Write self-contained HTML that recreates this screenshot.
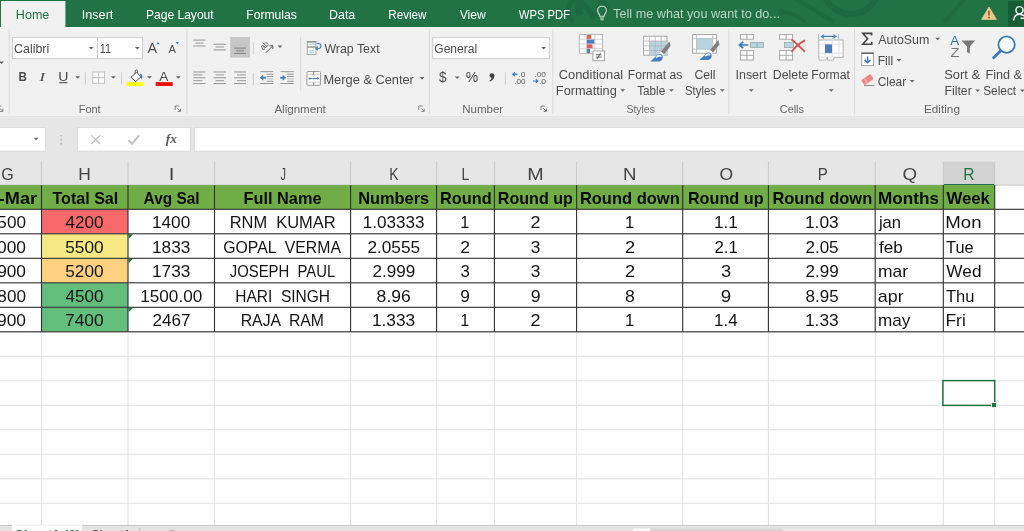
<!DOCTYPE html>
<html lang="en"><head><meta charset="utf-8"><title>Excel worksheet</title>
<style>
html,body{margin:0;padding:0;background:#fff;}
body{width:1024px;height:531px;overflow:hidden;font-family:"Liberation Sans",sans-serif;}
svg{display:block;position:absolute;left:0;top:0;will-change:transform}
svg text{font-family:"Liberation Sans",sans-serif;white-space:pre}
</style></head><body>
<svg width="1024" height="531" viewBox="0 0 1024 531">
<g id="tabbar">
<rect x="0" y="0" width="1024" height="27" fill="#217346"/>
<g fill="none" stroke="#1e6a40" stroke-linecap="butt">
<circle cx="851" cy="-14.2" r="28.25" stroke-width="6.3"/>
<path d="M796 -1 L834 22" stroke-width="4.4"/>
<path d="M780.4 12 C786 12 789 13.4 794 14.8 C798 16 800 18 805 22" stroke-width="3.6"/>
<circle cx="781" cy="12" r="2.6" stroke-width="1.6"/>
<path d="M965 -1 L944 22" stroke-width="4"/>
<path d="M573.5 22 C565 14 568 3 575 -2" stroke-width="5"/>
<path d="M580.5 -1 C577.5 5 578 11 580 15.5" stroke-width="7"/>
<path d="M581 1.5 L595.5 17.5" stroke-width="6"/>
<path d="M599 -1 C604 2 607 6 607.6 11" stroke-width="5"/>
</g>
<rect x="1" y="1" width="64.4" height="27" fill="#f1f1f1"/>
<text x="15.87" y="18.75" font-size="13.6" fill="#217346" textLength="33.49" lengthAdjust="spacingAndGlyphs" >Home</text>
<text x="81.73" y="18.75" font-size="13.6" fill="#ffffff" textLength="31.66" lengthAdjust="spacingAndGlyphs" >Insert</text>
<text x="145.91" y="18.75" font-size="13.6" fill="#ffffff" textLength="67.78" lengthAdjust="spacingAndGlyphs" >Page Layout</text>
<text x="246.31" y="18.75" font-size="13.6" fill="#ffffff" textLength="50.53" lengthAdjust="spacingAndGlyphs" >Formulas</text>
<text x="328.98" y="18.75" font-size="13.6" fill="#ffffff" textLength="26.32" lengthAdjust="spacingAndGlyphs" >Data</text>
<text x="388.24" y="18.75" font-size="13.6" fill="#ffffff" textLength="38.33" lengthAdjust="spacingAndGlyphs" >Review</text>
<text x="459.65" y="18.75" font-size="13.6" fill="#ffffff" textLength="26.12" lengthAdjust="spacingAndGlyphs" >View</text>
<text x="518.75" y="18.75" font-size="13.6" fill="#ffffff" textLength="51.40" lengthAdjust="spacingAndGlyphs" >WPS PDF</text>
<text x="613.12" y="18.40" font-size="13.2" fill="#b9d5c4" textLength="166.83" lengthAdjust="spacingAndGlyphs" >Tell me what you want to do...</text>
<g fill="none" stroke="#c9dfd1" stroke-width="1.1"><path d="M599.9 16.2 C599.9 14 597.6 13.2 597.6 10.6 A4.4 4.4 0 0 1 606.4 10.6 C606.4 13.2 604.1 14 604.1 16.2 Z"/><path d="M600 18 H604 M600.4 19.8 H603.6"/></g>
<path d="M989 7 L996.4 19.4 H981.6 Z" fill="#eac98b" stroke="#eac98b" stroke-width="0.8" stroke-linejoin="round"/>
<path d="M989 10.6 V15.4 M989 16.8 V18.2" stroke="#6b4a16" stroke-width="1.3" fill="none"/>
<rect x="1008" y="1" width="16" height="25.6" fill="#185c37"/>
<g fill="none" stroke="#fff" stroke-width="1.4"><circle cx="1019.5" cy="10.2" r="3.6"/><path d="M1013.6 20.5 C1014 15.5 1017 14.2 1019.5 14.2 C1021 14.2 1022.5 14.8 1024 16"/><path d="M1020.5 18.2 H1024"/></g>
</g>
<g id="ribbon">
<rect x="0" y="27" width="1024" height="90" fill="#f1f1f1"/>
<rect x="1" y="26.2" width="64.4" height="2" fill="#f1f1f1"/>
<rect x="0" y="116.5" width="1024" height="0.9" fill="#d9d9d9"/>
<rect x="8.7" y="29" width="1" height="85" fill="#dcdcdc"/>
<rect x="186.4" y="29" width="1" height="85" fill="#dcdcdc"/>
<rect x="300.1" y="36.7" width="1" height="53.8" fill="#dcdcdc"/>
<rect x="428.9" y="29" width="1" height="85" fill="#dcdcdc"/>
<rect x="552.3" y="29" width="1" height="85" fill="#dcdcdc"/>
<rect x="728.3" y="29" width="1" height="85" fill="#dcdcdc"/>
<rect x="854.0" y="29" width="1" height="85" fill="#dcdcdc"/>
<path d="M-0.80 61.40 H4.00 L1.60 63.90 Z" fill="#666"/>
<g fill="none" stroke="#777" stroke-width="0.9"><path d="M-2.5 110 V106 H1.5"/><path d="M-0.2999999999999998 108.2 L2.7 111.2 M2.9000000000000004 108.6 V111.4 H0.10000000000000009"/></g>
<rect x="12.3" y="37.7" width="85.1" height="20.9" fill="#fff" stroke="#c8c8c8" stroke-width="0.9"/>
<rect x="97.4" y="37.7" width="45.2" height="20.9" fill="#fff" stroke="#c8c8c8" stroke-width="0.9"/>
<text x="14.07" y="53.30" font-size="12.3" fill="#4c4c4c" textLength="35.17" lengthAdjust="spacingAndGlyphs" >Calibri</text>
<path d="M88.80 47.00 H93.60 L91.20 49.50 Z" fill="#666"/>
<text x="99.83" y="53.30" font-size="12.3" fill="#4c4c4c" textLength="11.27" lengthAdjust="spacingAndGlyphs" >11</text>
<path d="M134.90 47.00 H139.70 L137.30 49.50 Z" fill="#666"/>
<text x="147.47" y="53.30" font-size="14.6" fill="#4c4c4c" textLength="9.56" lengthAdjust="spacingAndGlyphs" >A</text>
<path d="M156.3 44.2 L158.0 42.0 L159.7 44.2 Z" fill="#3c78b4"/>
<text x="168.38" y="53.30" font-size="11.4" fill="#4c4c4c" textLength="7.44" lengthAdjust="spacingAndGlyphs" >A</text>
<path d="M175.6 42.0 L179.0 42.0 L177.3 44.2 Z" fill="#3c78b4"/>
<text x="18.42" y="81.30" font-size="12.8" fill="#4c4c4c" textLength="8.41" lengthAdjust="spacingAndGlyphs" font-weight="bold" >B</text>
<text x="39.37" y="81.30" font-size="12.8" fill="#4c4c4c" textLength="5.85" lengthAdjust="spacingAndGlyphs" font-style="italic" style="font-family:'Liberation Serif',serif" >I</text>
<text x="58.21" y="81.00" font-size="12.4" fill="#4c4c4c" textLength="10.17" lengthAdjust="spacingAndGlyphs" >U</text>
<rect x="59.2" y="82.2" width="8.2" height="1" fill="#444"/>
<path d="M75.30 76.20 H80.10 L77.70 78.70 Z" fill="#666"/>
<rect x="84.9" y="72.3" width="1" height="12.3" fill="#d0d0d0"/>
<g fill="#fcfcfc" stroke="#c2c2c2" stroke-width="1"><rect x="92.7" y="72" width="11.8" height="11.3"/><path d="M98.6 72 V83.3 M92.7 77.65 H104.5"/></g>
<path d="M110.90 76.20 H115.70 L113.30 78.70 Z" fill="#666"/>
<rect x="121" y="72.3" width="1" height="12.3" fill="#d0d0d0"/>
<g fill="none" stroke="#555" stroke-width="1"><path d="M131 77.2 L136.6 72.2 L141 77 L135.6 81.6 Z" fill="#fff"/><path d="M135.2 73.6 V71.2 A1.2 1.2 0 0 1 137.6 71.2 V73"/></g>
<path d="M140.2 74 C141.8 75.2 142 77.2 141.2 78.6" fill="none" stroke="#3c78b4" stroke-width="1.3"/>
<rect x="126.6" y="82.1" width="17" height="3.9" fill="#ffff14"/>
<path d="M147.00 76.20 H151.80 L149.40 78.70 Z" fill="#666"/>
<text x="159.27" y="81.20" font-size="13.2" fill="#4c4c4c" textLength="9.05" lengthAdjust="spacingAndGlyphs" >A</text>
<rect x="155.7" y="82.1" width="17" height="3.9" fill="#e81212"/>
<path d="M175.90 76.20 H180.70 L178.30 78.70 Z" fill="#666"/>
<text x="78.70" y="113.00" font-size="11.6" fill="#666" textLength="21.98" lengthAdjust="spacingAndGlyphs" >Font</text>
<g fill="none" stroke="#777" stroke-width="0.9"><path d="M175.2 110 V106 H179.2"/><path d="M177.39999999999998 108.2 L180.39999999999998 111.2 M180.6 108.6 V111.4 H177.79999999999998"/></g>
<rect x="193.30" y="39.65" width="12.10" height="0.9" fill="#8e8e8e"/>
<rect x="195.30" y="42.65" width="8.10" height="0.9" fill="#8e8e8e"/>
<rect x="193.30" y="45.55" width="12.10" height="0.9" fill="#8e8e8e"/>
<rect x="213.60" y="43.75" width="12.30" height="0.9" fill="#8e8e8e"/>
<rect x="215.60" y="46.55" width="8.30" height="0.9" fill="#8e8e8e"/>
<rect x="213.60" y="49.45" width="12.30" height="0.9" fill="#8e8e8e"/>
<rect x="230.2" y="37.1" width="19.7" height="20.5" fill="#c6c6c6"/>
<rect x="234.10" y="47.65" width="11.90" height="0.9" fill="#777"/>
<rect x="236.10" y="50.35" width="7.90" height="0.9" fill="#777"/>
<rect x="234.10" y="52.95" width="11.90" height="0.9" fill="#777"/>
<rect x="252.9" y="42.2" width="1" height="12.5" fill="#d0d0d0"/>
<g transform="translate(263.6,50.6) rotate(-47)"><text x="0" y="0" font-size="8.4" fill="#555" textLength="8.6" lengthAdjust="spacingAndGlyphs">ab</text></g>
<path d="M265.8 52.8 L272.6 46 M269.6 45.8 L272.9 45.7 L272.8 49" fill="none" stroke="#555" stroke-width="1"/>
<path d="M277.60 45.40 H282.40 L280.00 47.90 Z" fill="#666"/>
<g fill="#fbfbfb" stroke="#a2a2a2" stroke-width="0.9"><rect x="307.3" y="41.6" width="8.7" height="5"/><rect x="307.3" y="47.4" width="8.7" height="7.2"/></g>
<rect x="307" y="41.2" width="9.3" height="1.3" fill="#8a8a8a"/>
<path d="M308.8 44.1 H316 M308.8 50.8 H314.4 M308.8 52.8 H314.4" stroke="#8db7dc" stroke-width="0.8" fill="none"/>
<path d="M316.8 43.5 H318.4 A2.5 2.5 0 0 1 318.4 48.5 H316.4 M317.9 46.7 L316 48.5 L317.9 50.3" fill="none" stroke="#3f7fc1" stroke-width="1.1"/>
<text x="324.45" y="53.30" font-size="12.3" fill="#4c4c4c" textLength="55.14" lengthAdjust="spacingAndGlyphs" >Wrap Text</text>
<rect x="193.30" y="71.55" width="12.10" height="0.9" fill="#8e8e8e"/>
<rect x="213.60" y="71.55" width="12.30" height="0.9" fill="#8e8e8e"/>
<rect x="234.10" y="71.55" width="11.90" height="0.9" fill="#8e8e8e"/>
<rect x="193.30" y="74.45" width="9.10" height="0.9" fill="#8e8e8e"/>
<rect x="215.60" y="74.45" width="8.30" height="0.9" fill="#8e8e8e"/>
<rect x="237.10" y="74.45" width="8.90" height="0.9" fill="#8e8e8e"/>
<rect x="193.30" y="77.35" width="12.10" height="0.9" fill="#8e8e8e"/>
<rect x="213.60" y="77.35" width="12.30" height="0.9" fill="#8e8e8e"/>
<rect x="234.10" y="77.35" width="11.90" height="0.9" fill="#8e8e8e"/>
<rect x="193.30" y="80.25" width="9.10" height="0.9" fill="#8e8e8e"/>
<rect x="215.60" y="80.25" width="8.30" height="0.9" fill="#8e8e8e"/>
<rect x="237.10" y="80.25" width="8.90" height="0.9" fill="#8e8e8e"/>
<rect x="193.30" y="83.15" width="12.10" height="0.9" fill="#8e8e8e"/>
<rect x="213.60" y="83.15" width="12.30" height="0.9" fill="#8e8e8e"/>
<rect x="234.10" y="83.15" width="11.90" height="0.9" fill="#8e8e8e"/>
<rect x="252.9" y="72.9" width="1" height="12.3" fill="#d0d0d0"/>
<rect x="260.20" y="71.25" width="13.00" height="0.9" fill="#8e8e8e"/>
<rect x="280.40" y="71.25" width="13.30" height="0.9" fill="#8e8e8e"/>
<rect x="260.20" y="83.05" width="13.00" height="0.9" fill="#8e8e8e"/>
<rect x="280.40" y="83.05" width="13.30" height="0.9" fill="#8e8e8e"/>
<rect x="266.80" y="73.75" width="6.40" height="0.9" fill="#8e8e8e"/>
<rect x="287.20" y="73.75" width="6.50" height="0.9" fill="#8e8e8e"/>
<rect x="266.80" y="76.10" width="6.40" height="0.9" fill="#8e8e8e"/>
<rect x="287.20" y="76.10" width="6.50" height="0.9" fill="#8e8e8e"/>
<rect x="266.80" y="78.45" width="6.40" height="0.9" fill="#b5b5b5"/>
<rect x="287.20" y="78.45" width="6.50" height="0.9" fill="#b5b5b5"/>
<rect x="266.80" y="80.80" width="6.40" height="0.9" fill="#8e8e8e"/>
<rect x="287.20" y="80.80" width="6.50" height="0.9" fill="#8e8e8e"/>
<path d="M259.7 77.8 L263.2 74.8 V76.8 H265.9 V78.8 H263.2 V80.8 Z" fill="#4a7ebb"/>
<path d="M286.1 77.8 L282.6 74.8 V76.8 H280.2 V78.8 H282.6 V80.8 Z" fill="#4a7ebb"/>
<g fill="#fbfbfb" stroke="#9c9c9c" stroke-width="1"><rect x="306.9" y="71.5" width="13.6" height="13.8" rx="1.2"/></g>
<path d="M307 74.6 H320.4 M307 82.3 H320.4" stroke="#cfcfcf" stroke-width="0.9" fill="none"/><path d="M313.7 71.5 V74.6 M313.7 82.3 V85.3" stroke="#777" stroke-width="0.9" fill="none"/>
<path d="M309.4 78.5 H317.8" stroke="#4a7ebb" stroke-width="0.9" fill="none"/><path d="M308.1 78.5 L310.3 76.9 V80.1 Z M319.4 78.5 L317.2 76.9 V80.1 Z" fill="#4a7ebb"/>
<text x="323.45" y="83.60" font-size="12.3" fill="#4c4c4c" textLength="90.46" lengthAdjust="spacingAndGlyphs" >Merge &amp; Center</text>
<path d="M419.60 77.00 H424.40 L422.00 79.50 Z" fill="#666"/>
<text x="274.38" y="113.00" font-size="11.6" fill="#666" textLength="51.41" lengthAdjust="spacingAndGlyphs" >Alignment</text>
<g fill="none" stroke="#777" stroke-width="0.9"><path d="M418.8 110 V106 H422.8"/><path d="M421.0 108.2 L424.0 111.2 M424.2 108.6 V111.4 H421.40000000000003"/></g>
<rect x="432.7" y="37.7" width="116.6" height="20.9" fill="#fff" stroke="#c8c8c8" stroke-width="0.9"/>
<text x="434.29" y="53.30" font-size="12.3" fill="#4c4c4c" textLength="42.81" lengthAdjust="spacingAndGlyphs" >General</text>
<path d="M541.20 47.00 H546.00 L543.60 49.50 Z" fill="#666"/>
<text x="439.05" y="82.40" font-size="14.5" fill="#4c4c4c" textLength="7.57" lengthAdjust="spacingAndGlyphs" >$</text>
<path d="M454.80 76.40 H459.60 L457.20 78.90 Z" fill="#666"/>
<text x="465.70" y="82.40" font-size="14" fill="#4c4c4c" textLength="12.39" lengthAdjust="spacingAndGlyphs" >%</text>
<circle cx="491.9" cy="75.5" r="2.35" fill="#444"/><path d="M494.2 75 C494.8 78 492.8 80.6 489.6 81.6 L489.3 80.7 C491 79.8 491.8 78.6 491.4 77 Z" fill="#444"/>
<rect x="504.9" y="72.3" width="1" height="12.3" fill="#d0d0d0"/>
<text x="518.5" y="77.2" font-size="6.6" fill="#555" textLength="7" lengthAdjust="spacingAndGlyphs">.0</text>
<text x="514.2" y="84" font-size="6.6" fill="#555" textLength="11.3" lengthAdjust="spacingAndGlyphs">.00</text>
<path d="M517.6 74.2 H513 M514.8 72.4 L512.8 74.2 L514.8 76" fill="none" stroke="#3c78b4" stroke-width="1.2"/>
<text x="534.5" y="77.2" font-size="6.6" fill="#555" textLength="11.3" lengthAdjust="spacingAndGlyphs">.00</text>
<text x="539" y="84" font-size="6.6" fill="#555" textLength="7" lengthAdjust="spacingAndGlyphs">.0</text>
<path d="M533 81 H537.6 M535.8 79.2 L537.8 81 L535.8 82.8" fill="none" stroke="#3c78b4" stroke-width="1.2"/>
<text x="462.15" y="113.00" font-size="11.6" fill="#666" textLength="41.04" lengthAdjust="spacingAndGlyphs" >Number</text>
<g fill="none" stroke="#777" stroke-width="0.9"><path d="M541 110 V106 H545"/><path d="M543.2 108.2 L546.2 111.2 M546.4 108.6 V111.4 H543.6"/></g>
<g><rect x="579.3" y="34.4" width="23.2" height="19" fill="#fff" stroke="#b0b0b0" stroke-width="0.9"/>
<path d="M579.3 39.2 H602.5 M579.3 43.9 H602.5 M579.3 48.6 H602.5 M586.6 34.4 V53.4 M594.9 34.4 V53.4" stroke="#c8c8c8" stroke-width="0.8" fill="none"/>
<rect x="586.9" y="34.9" width="4.4" height="4" fill="#d9625e"/><rect x="586.9" y="39.6" width="7.4" height="4" fill="#4a7ebb"/><rect x="586.9" y="44.3" width="5.6" height="4" fill="#d9625e"/><rect x="586.9" y="49" width="3" height="4" fill="#4a7ebb"/>
<rect x="592.9" y="51" width="11.7" height="9.8" fill="#fff" stroke="#9a9a9a" stroke-width="0.9"/>
<path d="M595.8 54.8 H601.6 M595.8 57 H601.6 M600.6 52.8 L597 59" stroke="#555" stroke-width="0.9" fill="none"/></g>
<text x="558.75" y="78.70" font-size="12.3" fill="#4c4c4c" textLength="64.41" lengthAdjust="spacingAndGlyphs" >Conditional</text>
<text x="555.86" y="95.30" font-size="12.3" fill="#4c4c4c" textLength="60.87" lengthAdjust="spacingAndGlyphs" >Formatting</text>
<path d="M620.30 89.30 H625.10 L622.70 91.80 Z" fill="#666"/>
<g><rect x="643.5" y="36.2" width="23.5" height="19" fill="#fff" stroke="#a0a0a0" stroke-width="0.9"/>
<rect x="649.6" y="41" width="17.4" height="14.2" fill="#b8d4de"/>
<path d="M643.5 41 H667 M643.5 45.8 H667 M643.5 50.5 H667 M649.6 36.2 V55.2 M655.4 36.2 V55.2 M661.2 36.2 V55.2" stroke="#b5b5b5" stroke-width="0.8" fill="none"/></g>
<g transform="translate(0,0)">
<path d="M669.4 41.4 L670.6 46 L664.2 54 L661 51.4 Z" fill="#808080"/>
<path d="M661 51.6 L664 54.2 L662.6 56 L659.4 53.6 Z" fill="#fafafa"/>
<path d="M650.4 61.4 L655.6 56.6 C657 53.6 660.6 53 662.2 55.2 C663.8 57.6 662 61.4 659.2 61.4 Z" fill="#4a7ebb"/>
<path d="M656.2 57.6 C657 55.2 660 54.6 661.4 56.4 C660.6 55.8 657.6 56.2 656.2 57.6 Z" fill="#eef3f8" stroke="#eef3f8" stroke-width="1.2"/>
</g>
<text x="627.81" y="78.70" font-size="12.3" fill="#4c4c4c" textLength="54.43" lengthAdjust="spacingAndGlyphs" >Format as</text>
<text x="637.15" y="95.30" font-size="12.3" fill="#4c4c4c" textLength="28.15" lengthAdjust="spacingAndGlyphs" >Table</text>
<path d="M669.10 89.30 H673.90 L671.50 91.80 Z" fill="#666"/>
<g><rect x="692.6" y="34.6" width="24" height="18.6" fill="#fff" stroke="#a0a0a0" stroke-width="0.9"/>
<rect x="696.6" y="38.6" width="16" height="10.6" fill="#b8d4de"/>
<path d="M692.6 38.6 H716.6 M692.6 49.2 H716.6 M696.6 34.6 V53.2 M712.6 34.6 V53.2" stroke="#b5b5b5" stroke-width="0.8" fill="none"/></g>
<g transform="translate(48.9,-1.4)">
<path d="M669.4 41.4 L670.6 46 L664.2 54 L661 51.4 Z" fill="#808080"/>
<path d="M661 51.6 L664 54.2 L662.6 56 L659.4 53.6 Z" fill="#fafafa"/>
<path d="M650.4 61.4 L655.6 56.6 C657 53.6 660.6 53 662.2 55.2 C663.8 57.6 662 61.4 659.2 61.4 Z" fill="#4a7ebb"/>
<path d="M656.2 57.6 C657 55.2 660 54.6 661.4 56.4 C660.6 55.8 657.6 56.2 656.2 57.6 Z" fill="#eef3f8" stroke="#eef3f8" stroke-width="1.2"/>
</g>
<text x="694.38" y="78.70" font-size="12.3" fill="#4c4c4c" textLength="21.04" lengthAdjust="spacingAndGlyphs" >Cell</text>
<text x="684.98" y="95.30" font-size="12.3" fill="#4c4c4c" textLength="31.03" lengthAdjust="spacingAndGlyphs" >Styles</text>
<path d="M719.90 89.30 H724.70 L722.30 91.80 Z" fill="#666"/>
<text x="626.43" y="113.00" font-size="11.6" fill="#666" textLength="28.45" lengthAdjust="spacingAndGlyphs" >Styles</text>
<rect x="740.4" y="34.6" width="13" height="4.6" fill="#fff" stroke="#a0a0a0" stroke-width="0.9"/><path d="M746.90 34.6 V39.2 " stroke="#a0a0a0" stroke-width="0.9" fill="none"/>
<rect x="740.4" y="50.6" width="13" height="9.4" fill="#fff" stroke="#a0a0a0" stroke-width="0.9"/><path d="M746.90 50.6 V60.0 M740.4 55.30 H753.4 " stroke="#a0a0a0" stroke-width="0.9" fill="none"/>
<rect x="750.6" y="42.4" width="13" height="5" fill="#b8d4de" stroke="#9aa" stroke-width="0.8"/><path d="M757.1 42.4 V47.4" stroke="#9aa" stroke-width="0.8"/>
<path d="M748.4 45 H739.6 M743.2 41.8 L739.4 45 L743.2 48.2" fill="none" stroke="#3c78b4" stroke-width="1.7"/>
<text x="735.55" y="78.70" font-size="12.3" fill="#4c4c4c" textLength="31.04" lengthAdjust="spacingAndGlyphs" >Insert</text>
<path d="M748.90 89.30 H753.70 L751.30 91.80 Z" fill="#666"/>
<rect x="779.6" y="34.6" width="13" height="4.6" fill="#fff" stroke="#a0a0a0" stroke-width="0.9"/><path d="M786.10 34.6 V39.2 " stroke="#a0a0a0" stroke-width="0.9" fill="none"/>
<rect x="779.6" y="50.6" width="13" height="9.4" fill="#fff" stroke="#a0a0a0" stroke-width="0.9"/><path d="M786.10 50.6 V60.0 M779.6 55.30 H792.6 " stroke="#a0a0a0" stroke-width="0.9" fill="none"/>
<rect x="784.6" y="42.4" width="9" height="5" fill="#b8d4de" stroke="#9aa" stroke-width="0.8"/>
<path d="M792.2 40 C796 43 800 47 804.4 51.2 M804.4 40.6 C799 43.6 795 47 792.2 51.2" fill="none" stroke="#cf5555" stroke-width="1.9" stroke-linecap="round"/>
<text x="772.79" y="78.70" font-size="12.3" fill="#4c4c4c" textLength="35.66" lengthAdjust="spacingAndGlyphs" >Delete</text>
<path d="M788.50 89.30 H793.30 L790.90 91.80 Z" fill="#666"/>
<rect x="818.8" y="40" width="24.3" height="17.3" fill="#fff" stroke="#a9a9a9" stroke-width="0.9"/>
<path d="M825.2 40 V57.3 M832.2 40 V57.3 M839 40 V57.3 M818.8 44.2 H843.1 M818.8 53.2 H843.1" stroke="#dcdcdc" stroke-width="0.8" fill="none"/>
<rect x="825" y="44.4" width="7" height="8.6" fill="#4a7ebb"/>
<path d="M819 57.3 V60.2 H825.6 L826.8 57.3 M827.5 57.3 V60.2 H833.2 L834.4 57.3" fill="#fff" stroke="#a9a9a9" stroke-width="0.8"/>
<path d="M821.6 36.4 H835.8 M824 34.6 L821.4 36.4 L824 38.2 M833.4 34.6 L836 36.4 L833.4 38.2" fill="none" stroke="#4a7ebb" stroke-width="1.1"/><path d="M818.6 34 V39 M838.4 34 V39" fill="none" stroke="#8fb0d6" stroke-width="0.9"/>
<text x="811.30" y="78.70" font-size="12.3" fill="#4c4c4c" textLength="38.69" lengthAdjust="spacingAndGlyphs" >Format</text>
<path d="M828.90 89.30 H833.70 L831.30 91.80 Z" fill="#666"/>
<text x="779.75" y="113.00" font-size="11.6" fill="#666" textLength="24.25" lengthAdjust="spacingAndGlyphs" >Cells</text>
<path d="M871.6 35.6 V33.4 H862.8 L867.6 38.8 L862.8 44.2 H871.8 V41.8" fill="none" stroke="#444" stroke-width="1.6" stroke-linejoin="miter"/>
<text x="878.28" y="44.20" font-size="12.3" fill="#4c4c4c" textLength="51.04" lengthAdjust="spacingAndGlyphs" >AutoSum</text>
<path d="M935.20 37.70 H940.00 L937.60 40.20 Z" fill="#666"/>
<rect x="861.7" y="53.6" width="11.8" height="12" fill="#fff" stroke="#9a9a9a" stroke-width="0.9"/><rect x="861.3" y="52.4" width="12.6" height="1.6" fill="#666"/>
<path d="M867.6 56.4 V62.6 M864.8 60 L867.6 62.8 L870.4 60" fill="none" stroke="#3c78b4" stroke-width="1.5"/>
<text x="877.70" y="64.60" font-size="12.3" fill="#4c4c4c" textLength="15.51" lengthAdjust="spacingAndGlyphs" >Fill</text>
<path d="M896.60 58.90 H901.40 L899.00 61.40 Z" fill="#666"/>
<g transform="translate(867.4,79.6) rotate(-35)"><rect x="-5.6" y="-3" width="11.2" height="6" rx="1" fill="#ec8b8b"/><path d="M-2 -3 V3" stroke="#f6c3c3" stroke-width="0.8"/></g>
<path d="M864 85.6 H874.4" stroke="#888" stroke-width="1"/>
<text x="877.70" y="85.90" font-size="12.3" fill="#4c4c4c" textLength="28.40" lengthAdjust="spacingAndGlyphs" >Clear</text>
<path d="M909.70 80.00 H914.50 L912.10 82.50 Z" fill="#666"/>
<text x="950.27" y="44.80" font-size="13.4" fill="#3c78b4" textLength="8.95" lengthAdjust="spacingAndGlyphs" >A</text>
<text x="950.44" y="56.70" font-size="13.4" fill="#777" textLength="8.92" lengthAdjust="spacingAndGlyphs" >Z</text>
<path d="M961.6 40.4 H975.2 L969.8 46.6 V53.6 L967 52 V46.6 Z" fill="#777"/>
<text x="944.21" y="78.50" font-size="12.3" fill="#4c4c4c" textLength="35.99" lengthAdjust="spacingAndGlyphs" >Sort &amp;</text>
<text x="944.60" y="95.30" font-size="12.3" fill="#4c4c4c" textLength="27.10" lengthAdjust="spacingAndGlyphs" >Filter</text>
<path d="M975.30 89.50 H980.10 L977.70 92.00 Z" fill="#666"/>
<circle cx="1006.6" cy="44.6" r="8.2" fill="#fbfbfb" stroke="#3c78b4" stroke-width="1.8"/><path d="M1000.6 50.8 L993.6 57.8" stroke="#3c78b4" stroke-width="2.8" stroke-linecap="round"/>
<text x="985.57" y="78.50" font-size="12.3" fill="#4c4c4c" textLength="36.43" lengthAdjust="spacingAndGlyphs" >Find &amp;</text>
<text x="983.26" y="95.30" font-size="12.3" fill="#4c4c4c" textLength="32.82" lengthAdjust="spacingAndGlyphs" >Select</text>
<path d="M1020.00 89.50 H1024.80 L1022.40 92.00 Z" fill="#666"/>
<text x="923.93" y="113.20" font-size="11.6" fill="#666" textLength="36.03" lengthAdjust="spacingAndGlyphs" >Editing</text>
</g>
<g id="formulabar">
<rect x="0" y="117.4" width="1024" height="44" fill="#e6e6e6"/>
<rect x="-1" y="127.5" width="46.5" height="23.6" fill="#fff" stroke="#d8d8d8" stroke-width="0.8"/>
<path d="M33.70 137.80 H38.50 L36.10 140.30 Z" fill="#666"/>
<rect x="60.5" y="135.2" width="1.2" height="1.2" fill="#9a9a9a"/>
<rect x="60.5" y="139.2" width="1.2" height="1.2" fill="#9a9a9a"/>
<rect x="60.5" y="143.2" width="1.2" height="1.2" fill="#9a9a9a"/>
<rect x="77.5" y="127.5" width="112.9" height="23.6" fill="#fff" stroke="#d8d8d8" stroke-width="0.8"/>
<path d="M91.2 135.4 L100.2 144 M100.2 135.4 L91.2 144" stroke="#bcbcbc" stroke-width="1.2" fill="none"/>
<path d="M128.4 140.2 L132 143.8 L139.2 135.4" stroke="#c2c2c2" stroke-width="2" fill="none"/>
<text x="165.80" y="143.20" font-size="13" fill="#5a5a5a" textLength="11.13" lengthAdjust="spacingAndGlyphs" font-weight="bold" font-style="italic" style="font-family:'Liberation Serif',serif" >fx</text>
<rect x="194.3" y="127.5" width="840" height="23.6" fill="#fff" stroke="#d8d8d8" stroke-width="0.8"/>
</g>
<g id="grid">
<rect x="0" y="161" width="1024" height="24.4" fill="#e6e6e6"/>
<rect x="0" y="185.4" width="1024" height="341" fill="#fff"/>
<rect x="943.3" y="161.6" width="51.4" height="23.2" fill="#d2d2d2"/>
<rect x="943.3" y="184" width="51.4" height="1.5" fill="#217346"/>
<rect x="41.00" y="161.6" width="1" height="23.2" fill="#c9c9c9"/>
<rect x="127.50" y="161.6" width="1" height="23.2" fill="#c9c9c9"/>
<rect x="214.00" y="161.6" width="1" height="23.2" fill="#c9c9c9"/>
<rect x="350.10" y="161.6" width="1" height="23.2" fill="#c9c9c9"/>
<rect x="436.10" y="161.6" width="1" height="23.2" fill="#c9c9c9"/>
<rect x="493.90" y="161.6" width="1" height="23.2" fill="#c9c9c9"/>
<rect x="576.10" y="161.6" width="1" height="23.2" fill="#c9c9c9"/>
<rect x="682.20" y="161.6" width="1" height="23.2" fill="#c9c9c9"/>
<rect x="767.90" y="161.6" width="1" height="23.2" fill="#c9c9c9"/>
<rect x="874.70" y="161.6" width="1" height="23.2" fill="#c9c9c9"/>
<rect x="942.80" y="161.6" width="1" height="23.2" fill="#c9c9c9"/>
<rect x="994.20" y="161.6" width="1" height="23.2" fill="#c9c9c9"/>
<rect x="0" y="184.6" width="943" height="0.9" fill="#c4c4c4"/><rect x="994.7" y="184.6" width="30" height="0.9" fill="#c4c4c4"/>
<text x="1.19" y="179.90" font-size="17.2" fill="#444" textLength="12.51" lengthAdjust="spacingAndGlyphs" >G</text>
<text x="78.28" y="179.90" font-size="17.2" fill="#444" textLength="12.54" lengthAdjust="spacingAndGlyphs" >H</text>
<text x="168.82" y="179.90" font-size="17.2" fill="#444" textLength="5.66" lengthAdjust="spacingAndGlyphs" >I</text>
<text x="280.53" y="179.90" font-size="17.2" fill="#444" textLength="5.49" lengthAdjust="spacingAndGlyphs" >J</text>
<text x="389.26" y="179.90" font-size="17.2" fill="#444" textLength="9.30" lengthAdjust="spacingAndGlyphs" >K</text>
<text x="461.45" y="179.90" font-size="17.2" fill="#444" textLength="7.82" lengthAdjust="spacingAndGlyphs" >L</text>
<text x="527.38" y="179.90" font-size="17.2" fill="#444" textLength="16.44" lengthAdjust="spacingAndGlyphs" >M</text>
<text x="623.07" y="179.90" font-size="17.2" fill="#444" textLength="13.45" lengthAdjust="spacingAndGlyphs" >N</text>
<text x="719.47" y="179.90" font-size="17.2" fill="#444" textLength="13.67" lengthAdjust="spacingAndGlyphs" >O</text>
<text x="817.67" y="179.90" font-size="17.2" fill="#444" textLength="10.03" lengthAdjust="spacingAndGlyphs" >P</text>
<text x="902.61" y="179.90" font-size="17.2" fill="#444" textLength="14.59" lengthAdjust="spacingAndGlyphs" >Q</text>
<text x="963.32" y="179.90" font-size="17.2" fill="#217346" textLength="11.31" lengthAdjust="spacingAndGlyphs" >R</text>
<rect x="0" y="331.30" width="1024" height="1" fill="#e1e1e1"/>
<rect x="0" y="355.80" width="1024" height="1" fill="#e1e1e1"/>
<rect x="0" y="380.30" width="1024" height="1" fill="#e1e1e1"/>
<rect x="0" y="404.80" width="1024" height="1" fill="#e1e1e1"/>
<rect x="0" y="429.30" width="1024" height="1" fill="#e1e1e1"/>
<rect x="0" y="453.80" width="1024" height="1" fill="#e1e1e1"/>
<rect x="0" y="478.30" width="1024" height="1" fill="#e1e1e1"/>
<rect x="0" y="502.80" width="1024" height="1" fill="#e1e1e1"/>
<rect x="0" y="527.30" width="1024" height="1" fill="#e1e1e1"/>
<rect x="41.00" y="331.80" width="1" height="193.60" fill="#e1e1e1"/>
<rect x="127.50" y="331.80" width="1" height="193.60" fill="#e1e1e1"/>
<rect x="214.00" y="331.80" width="1" height="193.60" fill="#e1e1e1"/>
<rect x="350.10" y="331.80" width="1" height="193.60" fill="#e1e1e1"/>
<rect x="436.10" y="331.80" width="1" height="193.60" fill="#e1e1e1"/>
<rect x="493.90" y="331.80" width="1" height="193.60" fill="#e1e1e1"/>
<rect x="576.10" y="331.80" width="1" height="193.60" fill="#e1e1e1"/>
<rect x="682.20" y="331.80" width="1" height="193.60" fill="#e1e1e1"/>
<rect x="767.90" y="331.80" width="1" height="193.60" fill="#e1e1e1"/>
<rect x="874.70" y="331.80" width="1" height="193.60" fill="#e1e1e1"/>
<rect x="942.80" y="331.80" width="1" height="193.60" fill="#e1e1e1"/>
<rect x="994.20" y="331.80" width="1" height="193.60" fill="#e1e1e1"/>
<rect x="0" y="185.1" width="994.7" height="24.2" fill="#70ad47"/>
<rect x="41.5" y="209.30" width="86.5" height="24.5" fill="#f8696b"/>
<rect x="41.5" y="233.80" width="86.5" height="24.5" fill="#f7e984"/>
<rect x="41.5" y="258.30" width="86.5" height="24.5" fill="#fdd17f"/>
<rect x="41.5" y="282.80" width="86.5" height="24.5" fill="#63be7b"/>
<rect x="41.5" y="307.30" width="86.5" height="24.5" fill="#63be7b"/>
<rect x="0" y="208.75" width="1024" height="1.1" fill="#303030"/>
<rect x="0" y="233.25" width="1024" height="1.1" fill="#303030"/>
<rect x="0" y="257.75" width="1024" height="1.1" fill="#303030"/>
<rect x="0" y="282.25" width="1024" height="1.1" fill="#303030"/>
<rect x="0" y="306.75" width="1024" height="1.1" fill="#303030"/>
<rect x="0" y="331.25" width="1024" height="1.1" fill="#303030"/>
<rect x="40.95" y="185.1" width="1.1" height="146.70" fill="#303030"/>
<rect x="127.45" y="185.1" width="1.1" height="146.70" fill="#303030"/>
<rect x="213.95" y="185.1" width="1.1" height="146.70" fill="#303030"/>
<rect x="350.05" y="185.1" width="1.1" height="146.70" fill="#303030"/>
<rect x="436.05" y="185.1" width="1.1" height="146.70" fill="#303030"/>
<rect x="493.85" y="185.1" width="1.1" height="146.70" fill="#303030"/>
<rect x="576.05" y="185.1" width="1.1" height="146.70" fill="#303030"/>
<rect x="682.15" y="185.1" width="1.1" height="146.70" fill="#303030"/>
<rect x="767.85" y="185.1" width="1.1" height="146.70" fill="#303030"/>
<rect x="874.65" y="185.1" width="1.1" height="146.70" fill="#303030"/>
<rect x="942.75" y="185.1" width="1.1" height="146.70" fill="#303030"/>
<rect x="994.15" y="185.1" width="1.1" height="146.70" fill="#303030"/>
<path d="M128.6 234.30 H133 L128.6 238.70 Z" fill="#1e7145"/>
<path d="M128.6 258.80 H133 L128.6 263.20 Z" fill="#1e7145"/>
<path d="M128.6 307.80 H133 L128.6 312.20 Z" fill="#1e7145"/>
<text x="-1.21" y="203.70" font-size="17" fill="#0b0b0b" textLength="38.28" lengthAdjust="spacingAndGlyphs" font-weight="bold" >-Mar</text>
<text x="52.42" y="203.70" font-size="17" fill="#0b0b0b" textLength="65.90" lengthAdjust="spacingAndGlyphs" font-weight="bold" >Total Sal</text>
<text x="143.62" y="203.70" font-size="17" fill="#0b0b0b" textLength="56.06" lengthAdjust="spacingAndGlyphs" font-weight="bold" >Avg Sal</text>
<text x="243.51" y="203.70" font-size="17" fill="#0b0b0b" textLength="78.05" lengthAdjust="spacingAndGlyphs" font-weight="bold" >Full Name</text>
<text x="358.20" y="203.70" font-size="17" fill="#0b0b0b" textLength="70.97" lengthAdjust="spacingAndGlyphs" font-weight="bold" >Numbers</text>
<text x="439.91" y="203.70" font-size="17" fill="#0b0b0b" textLength="51.77" lengthAdjust="spacingAndGlyphs" font-weight="bold" >Round</text>
<text x="497.82" y="203.70" font-size="17" fill="#0b0b0b" textLength="75.14" lengthAdjust="spacingAndGlyphs" font-weight="bold" >Round up</text>
<text x="579.90" y="203.70" font-size="17" fill="#0b0b0b" textLength="99.83" lengthAdjust="spacingAndGlyphs" font-weight="bold" >Round down</text>
<text x="687.92" y="203.70" font-size="17" fill="#0b0b0b" textLength="75.65" lengthAdjust="spacingAndGlyphs" font-weight="bold" >Round up</text>
<text x="772.40" y="203.70" font-size="17" fill="#0b0b0b" textLength="99.83" lengthAdjust="spacingAndGlyphs" font-weight="bold" >Round down</text>
<text x="878.05" y="203.70" font-size="17" fill="#0b0b0b" textLength="60.95" lengthAdjust="spacingAndGlyphs" font-weight="bold" >Months</text>
<text x="946.38" y="203.70" font-size="17" fill="#0b0b0b" textLength="43.60" lengthAdjust="spacingAndGlyphs" font-weight="bold" >Week</text>
<text x="-12.19" y="228.20" font-size="17" fill="#141414" textLength="38.16" lengthAdjust="spacingAndGlyphs" >4500</text>
<text x="65.51" y="228.20" font-size="17" fill="#141414" textLength="38.16" lengthAdjust="spacingAndGlyphs" >4200</text>
<text x="151.99" y="228.20" font-size="17" fill="#141414" textLength="38.28" lengthAdjust="spacingAndGlyphs" >1400</text>
<text x="229.65" y="228.20" font-size="17" fill="#141414" textLength="105.91" lengthAdjust="spacingAndGlyphs" xml:space="preserve" >RNM  KUMAR</text>
<text x="362.70" y="228.20" font-size="17" fill="#141414" textLength="61.75" lengthAdjust="spacingAndGlyphs" >1.03333</text>
<text x="460.36" y="228.20" font-size="17" fill="#141414" textLength="9.03" lengthAdjust="spacingAndGlyphs" >1</text>
<text x="530.59" y="228.20" font-size="17" fill="#141414" textLength="10.01" lengthAdjust="spacingAndGlyphs" >2</text>
<text x="624.93" y="228.20" font-size="17" fill="#141414" textLength="9.29" lengthAdjust="spacingAndGlyphs" >1</text>
<text x="713.99" y="228.20" font-size="17" fill="#141414" textLength="23.95" lengthAdjust="spacingAndGlyphs" >1.1</text>
<text x="804.98" y="228.20" font-size="17" fill="#141414" textLength="33.68" lengthAdjust="spacingAndGlyphs" >1.03</text>
<text x="878.91" y="228.20" font-size="17" fill="#141414" textLength="22.17" lengthAdjust="spacingAndGlyphs" >jan</text>
<text x="945.37" y="228.20" font-size="17" fill="#141414" textLength="36.24" lengthAdjust="spacingAndGlyphs" >Mon</text>
<text x="-12.68" y="252.70" font-size="17" fill="#141414" textLength="38.66" lengthAdjust="spacingAndGlyphs" >6000</text>
<text x="65.21" y="252.70" font-size="17" fill="#141414" textLength="38.47" lengthAdjust="spacingAndGlyphs" >5500</text>
<text x="151.99" y="252.70" font-size="17" fill="#141414" textLength="38.37" lengthAdjust="spacingAndGlyphs" >1833</text>
<text x="223.22" y="252.70" font-size="17" fill="#141414" textLength="117.81" lengthAdjust="spacingAndGlyphs" xml:space="preserve" >GOPAL  VERMA</text>
<text x="367.43" y="252.70" font-size="17" fill="#141414" textLength="52.69" lengthAdjust="spacingAndGlyphs" >2.0555</text>
<text x="460.32" y="252.70" font-size="17" fill="#141414" textLength="9.77" lengthAdjust="spacingAndGlyphs" >2</text>
<text x="530.84" y="252.70" font-size="17" fill="#141414" textLength="9.62" lengthAdjust="spacingAndGlyphs" >3</text>
<text x="624.98" y="252.70" font-size="17" fill="#141414" textLength="10.13" lengthAdjust="spacingAndGlyphs" >2</text>
<text x="714.45" y="252.70" font-size="17" fill="#141414" textLength="23.47" lengthAdjust="spacingAndGlyphs" >2.1</text>
<text x="805.44" y="252.70" font-size="17" fill="#141414" textLength="33.17" lengthAdjust="spacingAndGlyphs" >2.05</text>
<text x="878.96" y="252.70" font-size="17" fill="#141414" textLength="23.76" lengthAdjust="spacingAndGlyphs" >feb</text>
<text x="946.04" y="252.70" font-size="17" fill="#141414" textLength="27.57" lengthAdjust="spacingAndGlyphs" >Tue</text>
<text x="-12.49" y="277.20" font-size="17" fill="#141414" textLength="38.47" lengthAdjust="spacingAndGlyphs" >5900</text>
<text x="65.21" y="277.20" font-size="17" fill="#141414" textLength="38.47" lengthAdjust="spacingAndGlyphs" >5200</text>
<text x="151.99" y="277.20" font-size="17" fill="#141414" textLength="38.37" lengthAdjust="spacingAndGlyphs" >1733</text>
<text x="229.77" y="277.20" font-size="17" fill="#141414" textLength="105.52" lengthAdjust="spacingAndGlyphs" xml:space="preserve" >JOSEPH  PAUL</text>
<text x="372.44" y="277.20" font-size="17" fill="#141414" textLength="42.77" lengthAdjust="spacingAndGlyphs" >2.999</text>
<text x="460.56" y="277.20" font-size="17" fill="#141414" textLength="9.38" lengthAdjust="spacingAndGlyphs" >3</text>
<text x="530.84" y="277.20" font-size="17" fill="#141414" textLength="9.62" lengthAdjust="spacingAndGlyphs" >3</text>
<text x="624.98" y="277.20" font-size="17" fill="#141414" textLength="10.13" lengthAdjust="spacingAndGlyphs" >2</text>
<text x="720.90" y="277.20" font-size="17" fill="#141414" textLength="10.21" lengthAdjust="spacingAndGlyphs" >3</text>
<text x="805.44" y="277.20" font-size="17" fill="#141414" textLength="33.27" lengthAdjust="spacingAndGlyphs" >2.99</text>
<text x="878.04" y="277.20" font-size="17" fill="#141414" textLength="30.05" lengthAdjust="spacingAndGlyphs" >mar</text>
<text x="946.32" y="277.20" font-size="17" fill="#141414" textLength="35.18" lengthAdjust="spacingAndGlyphs" >Wed</text>
<text x="-12.19" y="301.70" font-size="17" fill="#141414" textLength="38.16" lengthAdjust="spacingAndGlyphs" >4800</text>
<text x="65.51" y="301.70" font-size="17" fill="#141414" textLength="38.16" lengthAdjust="spacingAndGlyphs" >4500</text>
<text x="140.19" y="301.70" font-size="17" fill="#141414" textLength="62.08" lengthAdjust="spacingAndGlyphs" >1500.00</text>
<text x="235.33" y="301.70" font-size="17" fill="#141414" textLength="94.74" lengthAdjust="spacingAndGlyphs" xml:space="preserve" >HARI  SINGH</text>
<text x="376.64" y="301.70" font-size="17" fill="#141414" textLength="34.13" lengthAdjust="spacingAndGlyphs" >8.96</text>
<text x="460.39" y="301.70" font-size="17" fill="#141414" textLength="9.63" lengthAdjust="spacingAndGlyphs" >9</text>
<text x="530.67" y="301.70" font-size="17" fill="#141414" textLength="9.87" lengthAdjust="spacingAndGlyphs" >9</text>
<text x="625.13" y="301.70" font-size="17" fill="#141414" textLength="9.84" lengthAdjust="spacingAndGlyphs" >8</text>
<text x="720.72" y="301.70" font-size="17" fill="#141414" textLength="10.47" lengthAdjust="spacingAndGlyphs" >9</text>
<text x="805.56" y="301.70" font-size="17" fill="#141414" textLength="33.05" lengthAdjust="spacingAndGlyphs" >8.95</text>
<text x="877.74" y="301.70" font-size="17" fill="#141414" textLength="25.86" lengthAdjust="spacingAndGlyphs" >apr</text>
<text x="946.03" y="301.70" font-size="17" fill="#141414" textLength="28.47" lengthAdjust="spacingAndGlyphs" >Thu</text>
<text x="-12.69" y="326.20" font-size="17" fill="#141414" textLength="38.67" lengthAdjust="spacingAndGlyphs" >7900</text>
<text x="65.01" y="326.20" font-size="17" fill="#141414" textLength="38.67" lengthAdjust="spacingAndGlyphs" >7400</text>
<text x="152.44" y="326.20" font-size="17" fill="#141414" textLength="38.02" lengthAdjust="spacingAndGlyphs" >2467</text>
<text x="240.72" y="326.20" font-size="17" fill="#141414" textLength="83.26" lengthAdjust="spacingAndGlyphs" xml:space="preserve" >RAJA  RAM</text>
<text x="371.99" y="326.20" font-size="17" fill="#141414" textLength="43.17" lengthAdjust="spacingAndGlyphs" >1.333</text>
<text x="460.36" y="326.20" font-size="17" fill="#141414" textLength="9.03" lengthAdjust="spacingAndGlyphs" >1</text>
<text x="530.59" y="326.20" font-size="17" fill="#141414" textLength="10.01" lengthAdjust="spacingAndGlyphs" >2</text>
<text x="624.93" y="326.20" font-size="17" fill="#141414" textLength="9.29" lengthAdjust="spacingAndGlyphs" >1</text>
<text x="714.01" y="326.20" font-size="17" fill="#141414" textLength="23.59" lengthAdjust="spacingAndGlyphs" >1.4</text>
<text x="804.98" y="326.20" font-size="17" fill="#141414" textLength="33.68" lengthAdjust="spacingAndGlyphs" >1.33</text>
<text x="878.07" y="326.20" font-size="17" fill="#141414" textLength="32.27" lengthAdjust="spacingAndGlyphs" >may</text>
<text x="945.47" y="326.20" font-size="17" fill="#141414" textLength="20.30" lengthAdjust="spacingAndGlyphs" >Fri</text>
<rect x="942.9" y="380.6" width="51.8" height="24.8" fill="none" stroke="#217346" stroke-width="1.5"/>
<rect x="991.6" y="402.6" width="5" height="5" fill="#217346" stroke="#fff" stroke-width="0.8"/>
</g>
<g id="sheetbar">
<rect x="0" y="525.4" width="1024" height="6" fill="#e4e4e4"/>
<rect x="0" y="524.9" width="1024" height="1" fill="#c6c6c6"/>
<rect x="12.1" y="525.2" width="70" height="6" fill="#fff"/>
<text x="14.60" y="539.00" font-size="12.5" fill="#217346" textLength="66.09" lengthAdjust="spacingAndGlyphs" font-weight="bold" >Sheet1 (2)</text>
<text x="91.44" y="539.00" font-size="12.5" fill="#444" textLength="39.16" lengthAdjust="spacingAndGlyphs" >Sheet1</text>
<rect x="139.2" y="528" width="1" height="4" fill="#bbb"/>
<circle cx="172" cy="538.2" r="7.6" fill="none" stroke="#999" stroke-width="1"/>
<rect x="633.2" y="528.6" width="17" height="3" fill="#fff"/>
<rect x="650.2" y="528.6" width="380" height="3" fill="#d4d4d4"/>
<rect x="782.6" y="528.6" width="250" height="3" fill="#ececec"/>
</g>
</svg>
</body></html>
